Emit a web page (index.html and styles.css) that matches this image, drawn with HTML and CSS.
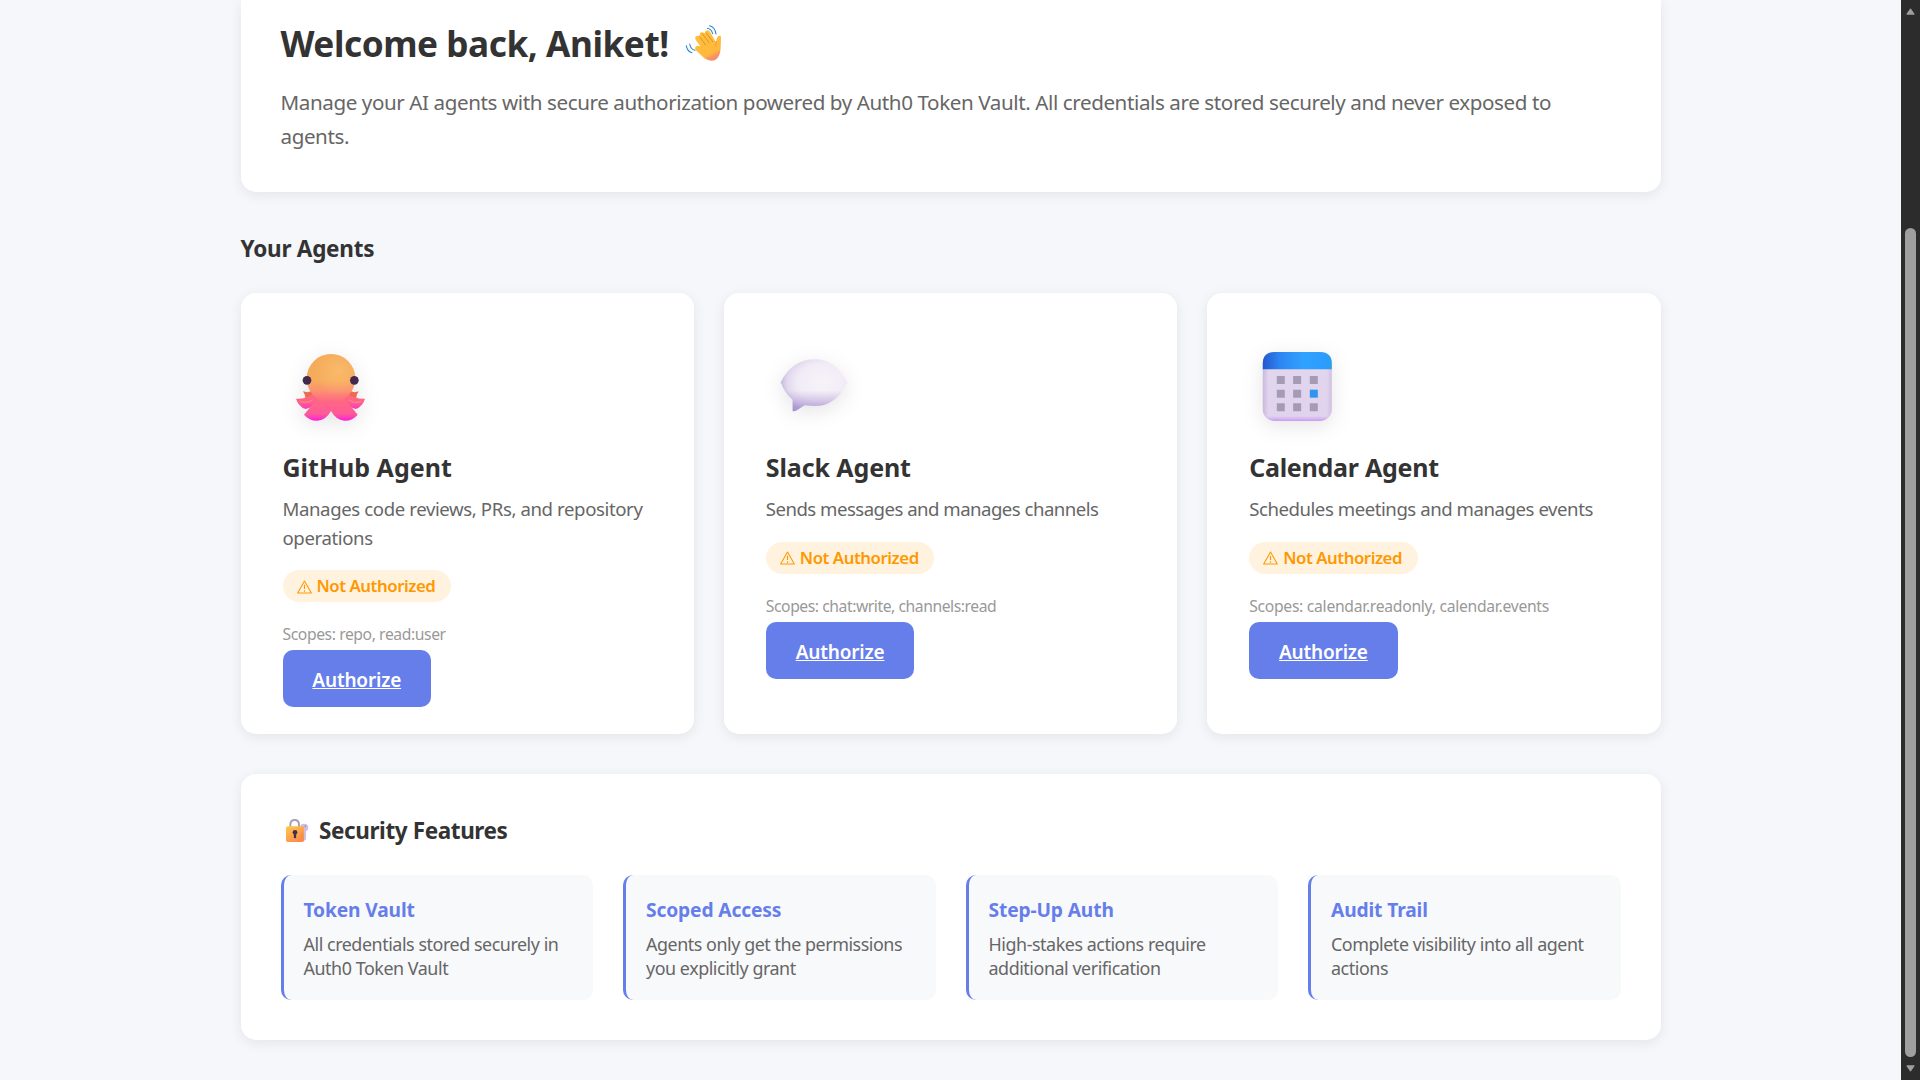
FILE: index.html
```html
<!DOCTYPE html>
<html lang="en">
<head>
<meta charset="utf-8">
<title>Agent Dashboard</title>
<link rel="stylesheet" href="styles.css">
</head>
<body>
<svg width="0" height="0" class="defs" aria-hidden="true">
  <defs>
    <symbol id="warn" viewBox="0 0 45 42">
      <path d="M22.5 3 43 39H2Z" fill="none" stroke="currentColor" stroke-width="3.2" stroke-linejoin="round"/>
      <path d="M22.5 14v13M22.5 30.500v4.500" fill="none" stroke="currentColor" stroke-width="3.600"/>
    </symbol>
  </defs>
</svg>
<div class="page">
  <main class="container">
    <section class="panel welcome">
      <h1 class="welcome-title">Welcome back, Aniket!
        <svg class="wave" viewBox="1362 72 114 114" aria-label="waving hand">
          <defs><linearGradient id="skin" x1="0" y1="0" x2="0.45" y2="1"><stop offset="0" stop-color="#ffc23c"/><stop offset=".85" stop-color="#ffb83c"/><stop offset="1" stop-color="#f5906a"/></linearGradient></defs>
          <g fill="none" stroke="#2b86d0" stroke-width="3.200" stroke-linecap="round">
            <path d="M1436 77q16 4 19 25M1429 85q12 2 16 16M1366 137q2 17 17 21M1376 132q3 16 16 19"/>
          </g>
          <path d="M1394 150q-5-8 4-13l10 2-14-20q-4-8 3-11 4-2 8 3l3 2-2-10q1-8 8-6l7 3q2-10 9-9 6 1 9 8l14 25 3-1q1-14 9-16 6-1 5 7l-1 30q-1 26-16 36-16 6-33-5z" fill="url(#skin)"/>
          <path d="M1404 108l20 27M1414 101l20 27M1426 99l19 26" fill="none" stroke="#dc922c" stroke-width="3" stroke-linecap="round"/>
          <path d="M1457 124q-5 8-2 15" fill="none" stroke="#e79c30" stroke-width="2.500" stroke-linecap="round"/>
        </svg>
      </h1>
      <p class="welcome-text">Manage your AI agents with secure authorization powered by Auth0 Token Vault. All credentials are stored securely and never exposed to <br>agents.</p>
    </section>

    <h2 class="section-title">Your Agents</h2>
    <div class="agents">
      <article class="agent agent-github">
        <svg class="agent-icon" viewBox="24 15 276 285" aria-label="octopus">
          <defs>
            <linearGradient id="head" x1="0" y1="0" x2="0" y2="1"><stop offset="0" stop-color="#f2ab58"/><stop offset=".55" stop-color="#f6ab5d"/><stop offset=".75" stop-color="#fb9270"/><stop offset="1" stop-color="#ff6386"/></linearGradient>
            <radialGradient id="shine" cx=".65" cy=".35" r=".5"><stop offset="0" stop-color="#ffc375" stop-opacity=".6"/><stop offset="1" stop-color="#ffc375" stop-opacity="0"/></radialGradient>
            <linearGradient id="leg" x1="0" y1="0" x2="0" y2="1"><stop offset="0" stop-color="#ff6f74"/><stop offset=".6" stop-color="#ff5c90"/><stop offset="1" stop-color="#fb35c0"/></linearGradient>
            <linearGradient id="frontleg" x1="0" y1="0" x2="0" y2="1"><stop offset="0" stop-color="#ff6a80"/><stop offset=".7" stop-color="#ff5a98"/><stop offset="1" stop-color="#fb1fd8"/></linearGradient>
          </defs>
          <path d="M84 184q14 5 24 0l14 22-30 4q1-14-8-26zM251 184q-12 5-24 0l-14 22 30 4q-1-14 8-26z" fill="#ef6a4c"/>
          <path d="M63 206q28 2 52-13h104q24 15 51 13-7 24-28 31l-40-14h-68l-42 14q-22-7-29-31z" fill="url(#leg)"/>
          <path d="M128 205 87 254q16 19 41 18 26-3 40-29 14 26 40 29 25 1 40-18l-40-49z" fill="url(#frontleg)"/>
          <circle cx="168" cy="145" r="73" fill="url(#head)"/>
          <circle cx="168" cy="145" r="73" fill="url(#shine)"/>
          <path d="M76 214q16 8 36-4M258 214q-16 8-36-4" fill="none" stroke="#ff8289" stroke-width="4" stroke-linecap="round"/>
          <circle cx="96" cy="151" r="13" fill="#42284f"/><circle cx="238" cy="151" r="13" fill="#42284f"/>
        </svg>
        <h3 class="agent-name">GitHub Agent</h3>
        <p class="agent-desc">Manages code reviews, PRs, and repository operations</p>
        <span class="badge"><svg class="badge-icon"><use href="#warn"/></svg>Not Authorized</span>
        <p class="scopes">Scopes: repo, read:user</p>
        <a class="btn" href="#">Authorize</a>
      </article>
      <article class="agent agent-slack">
        <svg class="agent-icon" viewBox="19 15 276 285" aria-label="speech balloon">
          <defs>
            <radialGradient id="bubble" cx=".62" cy=".45" r=".62"><stop offset="0" stop-color="#f6f4f8"/><stop offset=".6" stop-color="#f1ebf6"/><stop offset=".85" stop-color="#e2d8ed"/><stop offset="1" stop-color="#c4b8de"/></radialGradient>
            <linearGradient id="tail" x1="0" y1="0" x2="0" y2="1"><stop offset=".6" stop-color="#a98fd0" stop-opacity="0"/><stop offset="1" stop-color="#9d84cb"/></linearGradient>
          </defs>
          <path d="M63 157Q98 88 164 88T264 158Q228 228 166 228q-15 0-31-2-10 6-24 15-7 4-12 2l0-34Q74 189 63 157z" fill="url(#bubble)"/>
          <path d="M63 157Q98 88 164 88T264 158Q228 228 166 228q-15 0-31-2-10 6-24 15-7 4-12 2l0-34Q74 189 63 157z" fill="url(#tail)" opacity=".75"/>
        </svg>
        <h3 class="agent-name">Slack Agent</h3>
        <p class="agent-desc">Sends messages and manages channels</p>
        <span class="badge"><svg class="badge-icon"><use href="#warn"/></svg>Not Authorized</span>
        <p class="scopes">Scopes: chat:write, channels:read</p>
        <a class="btn" href="#">Authorize</a>
      </article>
      <article class="agent agent-calendar">
        <svg class="agent-icon" viewBox="27.6 15 276 285" aria-label="calendar">
          <defs>
            <linearGradient id="calbody" x1="0" y1="0" x2="0" y2="1"><stop offset="0" stop-color="#e2d7ef"/><stop offset=".93" stop-color="#e0d3ed"/><stop offset="1" stop-color="#c99cf3"/></linearGradient>
            <linearGradient id="caltop" x1="0" y1="0" x2="1" y2="0"><stop offset="0" stop-color="#2358cd"/><stop offset=".25" stop-color="#2d86f3"/><stop offset=".6" stop-color="#30a2ff"/><stop offset=".9" stop-color="#2c9cff"/><stop offset="1" stop-color="#299fe9"/></linearGradient>
            <linearGradient id="calside" x1="0" y1="0" x2="1" y2="0"><stop offset="0" stop-color="#b9a5cf" stop-opacity=".6"/><stop offset=".08" stop-color="#b9a5cf" stop-opacity="0"/><stop offset=".93" stop-color="#b9a5cf" stop-opacity="0"/><stop offset="1" stop-color="#b9a5cf" stop-opacity=".45"/></linearGradient>
          </defs>
          <rect x="69" y="66" width="207" height="207" rx="35" fill="url(#calbody)"/>
          <rect x="69" y="66" width="207" height="207" rx="35" fill="url(#calside)"/>
          <path d="M69 118v-17q0-35 35-35h137q35 0 35 35v17z" fill="url(#caltop)"/>
          <path d="M111 138h24v24h-24zM160 138h24v24h-24zM210 138h24v24h-24zM111 179h24v24h-24zM160 179h24v24h-24zM111 220h24v24h-24zM160 220h24v24h-24zM210 220h24v24h-24z" fill="#a69bb6"/>
          <path d="M210 179h24v24h-24z" fill="#3195ef"/>
        </svg>
        <h3 class="agent-name">Calendar Agent</h3>
        <p class="agent-desc">Schedules meetings and manages events</p>
        <span class="badge"><svg class="badge-icon"><use href="#warn"/></svg>Not Authorized</span>
        <p class="scopes">Scopes: calendar.readonly, calendar.events</p>
        <a class="btn" href="#">Authorize</a>
      </article>
    </div>

    <section class="panel security">
      <h2 class="security-title">
        <svg class="lock" viewBox="162 174 78 78" aria-label="lock with key">
          <defs><linearGradient id="lockg" x1="0" y1="0" x2=".7" y2="1"><stop offset="0" stop-color="#ffc94d"/><stop offset="1" stop-color="#fb8a4c"/></linearGradient></defs>
          <path d="M181 200v-6q0-14 13-14t13 14v6" fill="none" stroke="#aaa0b4" stroke-width="6"/>
          <path d="M211 197q2-6 11-6 13 0 13 12 0 8-7 11v24l-4 4-8-5 2-21q-7-7-7-19z" fill="#cdbfdd"/>
          <circle cx="226" cy="199" r="3" fill="#a999c0"/>
          <rect x="168" y="199" width="54" height="47" rx="5" fill="url(#lockg)"/>
          <path d="M216 215v22" stroke="#e87c55" stroke-width="3" opacity=".5"/>
          <circle cx="195" cy="217" r="7" fill="#43304f"/><rect x="191.500" y="217" width="7" height="18" rx="3" fill="#43304f"/>
        </svg>
        <span>Security Features</span>
      </h2>
      <div class="features">
        <div class="feature"><h4 class="feature-name">Token Vault</h4><p class="feature-text">All credentials stored securely in Auth0 Token Vault</p></div>
        <div class="feature"><h4 class="feature-name">Scoped Access</h4><p class="feature-text">Agents only get the permissions you explicitly grant</p></div>
        <div class="feature"><h4 class="feature-name">Step-Up Auth</h4><p class="feature-text">High-stakes actions require additional verification</p></div>
        <div class="feature"><h4 class="feature-name">Audit Trail</h4><p class="feature-text">Complete visibility into all agent actions</p></div>
      </div>
    </section>
  </main>
  <div class="scrollbar" aria-hidden="true">
    <svg class="arrow" viewBox="0 0 9 7"><path d="M4.500 .8 8.200 6.200H.8z"/></svg>
    <div class="track"><div class="thumb"></div></div>
    <svg class="arrow" viewBox="0 0 9 7"><path d="M4.500 6.200 8.200 .8H.8z"/></svg>
  </div>
</div>
</body>
</html>
```
FILE: styles.css
```css
* {
  box-sizing: border-box;
  margin: 0;
  padding: 0;
}

body {
  height: 1080px;
  overflow: hidden;
  background: #f5f7fb;
  color: #333;
  font-family: "Segoe UI", "Noto Sans", sans-serif;
}

.defs {
  display: none;
}

.page {
  display: flex;
  height: 1080px;
}

.container {
  width: 1420px;
  margin: 0 auto;
}

.panel,
.agent {
  background: #fff;
  border-radius: 15px;
  box-shadow: 0 3px 13px rgba(0, 0, 0, 0.08);
}

.welcome {
  height: 192px;
  padding: 18px 40px 39px;
  border-radius: 0 0 15px 15px;
}

.welcome-title {
  display: flex;
  align-items: center;
  height: 50px;
  margin-bottom: 17px;
  font-size: 35.2px;
  line-height: 50px;
  letter-spacing: -0.45px;
}

.wave {
  width: 38px;
  height: 38px;
  margin: 0 0 0 16px;
}

.welcome-text {
  color: #666;
  font-size: 20.6px;
  line-height: 34px;
  letter-spacing: -0.405px;
  white-space: nowrap;
}

.section-title {
  margin: 42px 0 29px;
  font-size: 22.500px;
  line-height: 30px;
  letter-spacing: -0.25px;
}

.agents {
  display: grid;
  grid-template-columns: repeat(3, 1fr);
  gap: 30px;
  margin-bottom: 40px;
}

.agent {
  display: flex;
  flex-direction: column;
  align-items: flex-start;
  height: 441px;
  padding: 42px;
}

.agent-icon {
  width: 92px;
  height: 95px;
  margin-bottom: 20px;
  overflow: visible;
  filter: drop-shadow(0 5px 10px rgba(0, 0, 0, 0.1));
}

.agent-name {
  margin-bottom: 11px;
  font-size: 25px;
  line-height: 34px;
  letter-spacing: var(--name-spacing);
}

.agent-desc {
  margin-bottom: 18px;
  color: #666;
  font-size: 18.6px;
  line-height: 28.500px;
  letter-spacing: var(--desc-spacing);
}

.agent-github {
  --name-spacing: 0;
  --desc-spacing: -0.39px;
  --scope-spacing: -0.41px;
}

.agent-slack {
  --name-spacing: -0.11px;
  --desc-spacing: -0.52px;
  --scope-spacing: -0.44px;
}

.agent-calendar {
  --name-spacing: -0.26px;
  --desc-spacing: -0.45px;
  --scope-spacing: -0.28px;
}

.badge {
  display: flex;
  align-items: center;
  gap: 5px;
  width: 168.500px;
  height: 32px;
  margin-bottom: 21px;
  padding-left: 14px;
  border-radius: 16px;
  background: #fff3e0;
  color: #ff9800;
  font-size: 16.8px;
  font-weight: 600;
  line-height: 33.500px;
  letter-spacing: -0.45px;
  white-space: nowrap;
}

.badge-icon {
  width: 15px;
  height: 14px;
  margin-top: 1px;
}

.scopes {
  margin-bottom: 5px;
  color: #999;
  font-size: 15.7px;
  line-height: 22px;
  letter-spacing: var(--scope-spacing);
}

.btn {
  width: 148.500px;
  height: 57px;
  border-radius: 10px;
  background: #667eea;
  color: #fff;
  font-size: 19px;
  font-weight: 600;
  line-height: 60px;
  letter-spacing: -0.18px;
  text-align: center;
}

.security {
  height: 266px;
  padding: 42px 40px 40px;
}

.security-title {
  display: flex;
  align-items: center;
  gap: 9.500px;
  height: 30px;
  margin-bottom: 29px;
  padding-left: 3px;
  font-size: 22.500px;
  line-height: 30px;
  letter-spacing: -0.4px;
}

.lock {
  width: 26px;
  height: 26px;
}

.features {
  display: grid;
  grid-template-columns: repeat(4, 1fr);
  gap: 30px;
}

.feature {
  height: 125px;
  padding: 22px 18px 20px 20px;
  border-left: 3px solid #667eea;
  border-radius: 10px;
  background: #f8f9fb;
}

.feature-name {
  margin-bottom: 8.500px;
  color: #667eea;
  font-size: 19.2px;
  line-height: 26px;
  letter-spacing: -0.13px;
}

.feature-text {
  color: #666;
  font-size: 17.900px;
  line-height: 24px;
  letter-spacing: -0.45px;
}

.scrollbar {
  display: flex;
  flex-direction: column;
  align-items: center;
  width: 19px;
  padding: 8px 0;
  background: #2c2c2c;
}

.arrow {
  width: 9px;
  height: 7px;
  fill: #9f9f9f;
  stroke: #9f9f9f;
  stroke-width: 1;
  stroke-linejoin: round;
}

.track {
  flex: 1;
  padding: 213px 0 8px;
}

.thumb {
  width: 11px;
  height: 100%;
  border-radius: 6px;
  background: #9f9f9f;
}
```
